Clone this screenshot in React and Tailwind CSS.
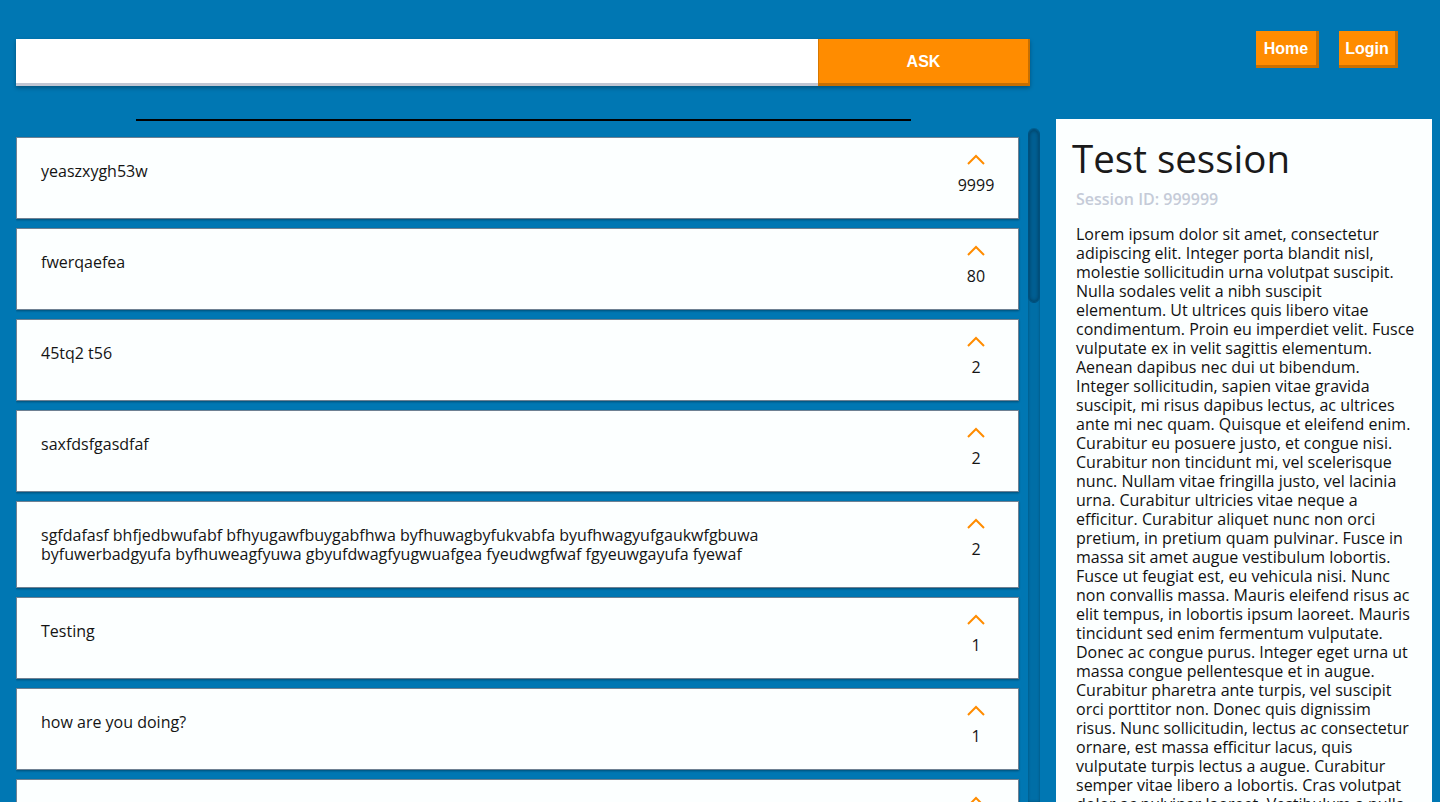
import React from "react";

const questions = [
  { text: "yeaszxygh53w", votes: 9999 },
  { text: "fwerqaefea", votes: 80 },
  { text: "45tq2 t56", votes: 2 },
  { text: "saxfdsfgasdfaf", votes: 2 },
  {
    text: "sgfdafasf bhfjedbwufabf bfhyugawfbuygabfhwa byfhuwagbyfukvabfa byufhwagyufgaukwfgbuwa byfuwerbadgyufa byfhuweagfyuwa gbyufdwagfyugwuafgea fyeudwgfwaf fgyeuwgayufa fyewaf",
    votes: 2,
  },
  { text: "Testing", votes: 1 },
  { text: "how are you doing?", votes: 1 },
  { text: "hello", votes: 1 },
  { text: "test question", votes: 0 },
];

const lorem =
  "Lorem ipsum dolor sit amet, consectetur adipiscing elit. Integer porta blandit nisl, molestie sollicitudin urna volutpat suscipit. Nulla sodales velit a nibh suscipit elementum. Ut ultrices quis libero vitae condimentum. Proin eu imperdiet velit. Fusce vulputate ex in velit sagittis elementum. Aenean dapibus nec dui ut bibendum. Integer sollicitudin, sapien vitae gravida suscipit, mi risus dapibus lectus, ac ultrices ante mi nec quam. Quisque et eleifend enim. Curabitur eu posuere justo, et congue nisi. Curabitur non tincidunt mi, vel scelerisque nunc. Nullam vitae fringilla justo, vel lacinia urna. Curabitur ultricies vitae neque a efficitur. Curabitur aliquet nunc non orci pretium, in pretium quam pulvinar. Fusce in massa sit amet augue vestibulum lobortis. Fusce ut feugiat est, eu vehicula nisi. Nunc non convallis massa. Mauris eleifend risus ac elit tempus, in lobortis ipsum laoreet. Mauris tincidunt sed enim fermentum vulputate. Donec ac congue purus. Integer eget urna ut massa congue pellentesque et in augue. Curabitur pharetra ante turpis, vel suscipit orci porttitor non. Donec quis dignissim risus. Nunc sollicitudin, lectus ac consectetur ornare, est massa efficitur lacus, quis vulputate turpis lectus a augue. Curabitur semper vitae libero a lobortis. Cras volutpat dolor ac pulvinar laoreet. Vestibulum a nulla sit amet nisi cursus aliquet.";

function Chevron() {
  return (
    <svg width="20" height="14" viewBox="0 0 20 14" className="block mx-auto" fill="none">
      <path d="M2 12 L10 4 L18 12" stroke="#ff8c00" strokeWidth="2" />
    </svg>
  );
}

function QuestionCard({ text, votes }) {
  return (
    <div className="flex items-start shrink-0 min-h-[82px] bg-[#fcffff] border border-[#6f8193] shadow-[0_1px_2px_rgba(0,0,0,0.35)]">
      <div className="flex-1 min-w-0 pl-6 pt-[24px] pb-[23px]">
        <p className="max-w-[745px] text-[16px] leading-[19px] text-[#141414]">{text}</p>
      </div>
      <div className="w-[60px] mr-[12px] pt-[14px] text-center">
        <Chevron />
        <div className="mt-[10px] text-[16px] leading-[19px] text-[#141414]">{votes}</div>
      </div>
    </div>
  );
}

const navBtn =
  "block bg-[#ff8c00] text-white text-center font-['Liberation_Sans',Arial,sans-serif] font-bold text-[16px] leading-[20px] pt-[8px] pb-[6px] border-r-[3px] border-b-[3px] border-[#c96f00]";

export default function App() {
  return (
    <div className="h-screen overflow-hidden bg-[#0077b3] flex flex-col font-['Open_Sans',sans-serif]">
      <header className="flex items-start shrink-0">
        <form
          className="ml-4 mt-[39px] flex w-[1014px] h-[47px] shadow-[0_2px_4px_rgba(0,0,0,0.3)]"
          onSubmit={(e) => e.preventDefault()}
        >
          <input
            type="text"
            className="w-[802px] h-full bg-white border-b-[3px] border-[#c1c6d3] outline-none px-3"
          />
          <button
            type="submit"
            className="flex-1 h-full pt-[2px] bg-[#ff8c00] text-white font-['Liberation_Sans',Arial,sans-serif] font-bold text-[16px] border-l border-l-[#d77800] border-r-[2px] border-b-[3px] border-r-[#c96f00] border-b-[#c96f00]"
          >
            ASK
          </button>
        </form>
        <nav className="ml-auto mr-[42px] mt-[31px] flex gap-[20px]">
          <a className={navBtn + " w-[63px]"}>Home</a>
          <a className={navBtn + " w-[59px]"}>Login</a>
        </nav>
      </header>

      <main className="flex flex-1 min-h-0 mt-[33px]">
        <section className="ml-4 w-[1024px] flex flex-col min-h-0">
          <hr className="ml-[120px] w-[775px] border-0 h-[2px] bg-black shrink-0" />
          <div className="mt-[7px] flex flex-1 min-h-0">
            <div className="flex-1 min-w-0 overflow-hidden pt-[9px] pr-[9px] flex flex-col gap-[9px]">
              {questions.map((q, i) => (
                <QuestionCard key={i} text={q.text} votes={q.votes} />
              ))}
            </div>
            <div className="w-[12px] h-full rounded-t-full bg-[#006ea6] shadow-[inset_0_0_3px_rgba(0,0,0,0.3)]">
              <div className="mt-[1px] h-[174px] rounded-full bg-[#005f93] border border-[#004f7c] shadow-[inset_0_0_4px_rgba(0,0,0,0.4)]" />
            </div>
          </div>
        </section>

        <aside className="ml-4 w-[376px] bg-[#fcffff] overflow-hidden">
          <h1 className="pl-4 pt-[15px] text-[38.5px] leading-[48px] font-normal text-[#1a1a1a]">
            Test session
          </h1>
          <div className="pl-5 mt-[6px] text-[16px] leading-[22px] font-semibold text-[#c5cbd8]">
            Session ID: 999999
          </div>
          <p className="pl-5 pr-[17.5px] mt-[15px] text-[16px] leading-[19px] text-[#111]">{lorem}</p>
        </aside>
      </main>
    </div>
  );
}
